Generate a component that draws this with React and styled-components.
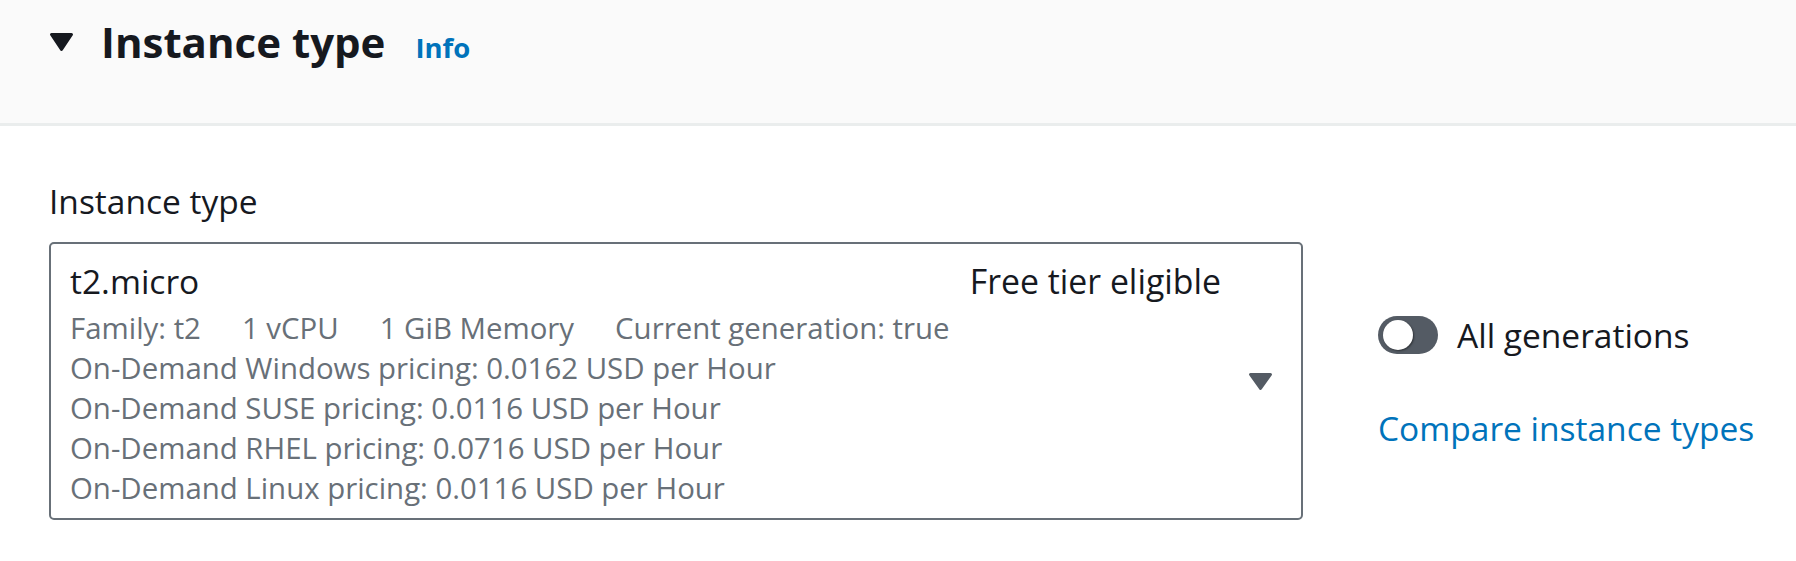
import styled, { createGlobalStyle } from "styled-components";

const GlobalStyle = createGlobalStyle`
  body {
    margin: 0;
    background: #ffffff;
    font-family: "Open Sans", "Noto Sans", sans-serif;
    color: #16191f;
  }
`

const Header = styled.div`
  box-sizing: border-box;
  height: 126px;
  padding: 16px 49px 0;
  background: #fafafa;
  border-bottom: 3px solid #eaeded;
`

const HeaderRow = styled.div`
  display: flex;
  align-items: center;
  height: 52px;
`

const Expander = styled.svg`
  width: 25px;
  height: 20px;
  margin-right: 27px;
  flex-shrink: 0;
`

const TitleGroup = styled.div`
  display: flex;
  align-items: baseline;
`

const Title = styled.h2`
  margin: 0;
  font-size: 42px;
  line-height: 52px;
  font-weight: 700;
  color: #16191f;
`

const InfoLink = styled.a`
  margin-left: 30px;
  font-size: 27.5px;
  font-weight: 700;
  color: #0073bb;
  text-decoration: none;
`

const Body = styled.div`
  padding: 48px 49px;
`

const Label = styled.div`
  font-size: 33.5px;
  line-height: 54px;
  margin-bottom: 14px;
  color: #16191f;
`

const FieldRow = styled.div`
  display: flex;
  align-items: center;
  gap: 75px;
`

const SelectBox = styled.div`
  box-sizing: border-box;
  width: 1254px;
  height: 278px;
  flex-shrink: 0;
  display: flex;
  align-items: center;
  padding: 10px 28px 10px 19px;
  border: 2px solid #687078;
  border-radius: 5px;
  background: #ffffff;
`

const Option = styled.div`
  flex: 1;
  align-self: flex-start;
`

const OptionTop = styled.div`
  display: flex;
  justify-content: space-between;
  font-size: 33.5px;
  line-height: 54px;
  color: #16191f;
`

const FreeTier = styled.span`
  font-size: 33.8px;
`

const Tags = styled.div`
  display: flex;
  gap: 41px;
`

const Desc = styled.div`
  font-size: 29.4px;
  line-height: 40px;
  color: #687078;
  white-space: nowrap;
`

const Caret = styled.svg`
  width: 25px;
  height: 19px;
  margin-left: 27px;
  flex-shrink: 0;
`

const Side = styled.div`
  display: flex;
  flex-direction: column;
  align-items: flex-start;
  flex-shrink: 0;
  white-space: nowrap;
`

const ToggleRow = styled.label`
  display: flex;
  align-items: center;
  gap: 19px;
  height: 54px;
  font-size: 33.5px;
  color: #16191f;
`

const Toggle = styled.span`
  position: relative;
  width: 60px;
  height: 38px;
  border-radius: 19px;
  background: ${(p) => (p.$on ? "#0073bb" : "#545b64")};
  flex-shrink: 0;

  &::after {
    content: "";
    position: absolute;
    top: 4px;
    left: ${(p) => (p.$on ? "27px" : "5px")};
    width: 30px;
    height: 30px;
    border-radius: 50%;
    background: #ffffff;
    box-shadow: 1px 1px 2px rgba(0, 0, 0, 0.45);
  }
`

const CompareLink = styled.a`
  margin-top: 39px;
  font-size: 33.5px;
  line-height: 54px;
  color: #0073bb;
  text-decoration: none;
`

const tags = ["Family: t2", "1 vCPU", "1 GiB Memory", "Current generation: true"];

const pricing = [
  ["Windows", "0.0162"],
  ["SUSE", "0.0116"],
  ["RHEL", "0.0716"],
  ["Linux", "0.0116"],
];

const App = () => {
  return (
    <>
      <GlobalStyle />
      <Header>
        <HeaderRow>
          <Expander viewBox="0 0 25 20">
            <path d="M2.5 2.5 H22.5 L12.5 17.5 Z" fill="#16191f" stroke="#16191f" strokeWidth="3" strokeLinejoin="round" />
          </Expander>
          <TitleGroup>
            <Title>Instance type</Title>
            <InfoLink href="#">Info</InfoLink>
          </TitleGroup>
        </HeaderRow>
      </Header>
      <Body>
        <Label>Instance type</Label>
        <FieldRow>
          <SelectBox>
            <Option>
              <OptionTop>
                <span>t2.micro</span>
                <FreeTier>Free tier eligible</FreeTier>
              </OptionTop>
              <Desc>
                <Tags>
                  {tags.map((t) => (
                    <span key={t}>{t}</span>
                  ))}
                </Tags>
              </Desc>
              {pricing.map(([os, price]) => (
                <Desc key={os}>
                  On-Demand {os} pricing: {price} USD per Hour
                </Desc>
              ))}
            </Option>
            <Caret viewBox="0 0 25 19">
              <path d="M2.5 2.5 H22.5 L12.5 16.5 Z" fill="#545b64" stroke="#545b64" strokeWidth="3" strokeLinejoin="round" />
            </Caret>
          </SelectBox>
          <Side>
            <ToggleRow>
              <Toggle />
              All generations
            </ToggleRow>
            <CompareLink href="#">Compare instance types</CompareLink>
          </Side>
        </FieldRow>
      </Body>
    </>
  );
};

export default App;
